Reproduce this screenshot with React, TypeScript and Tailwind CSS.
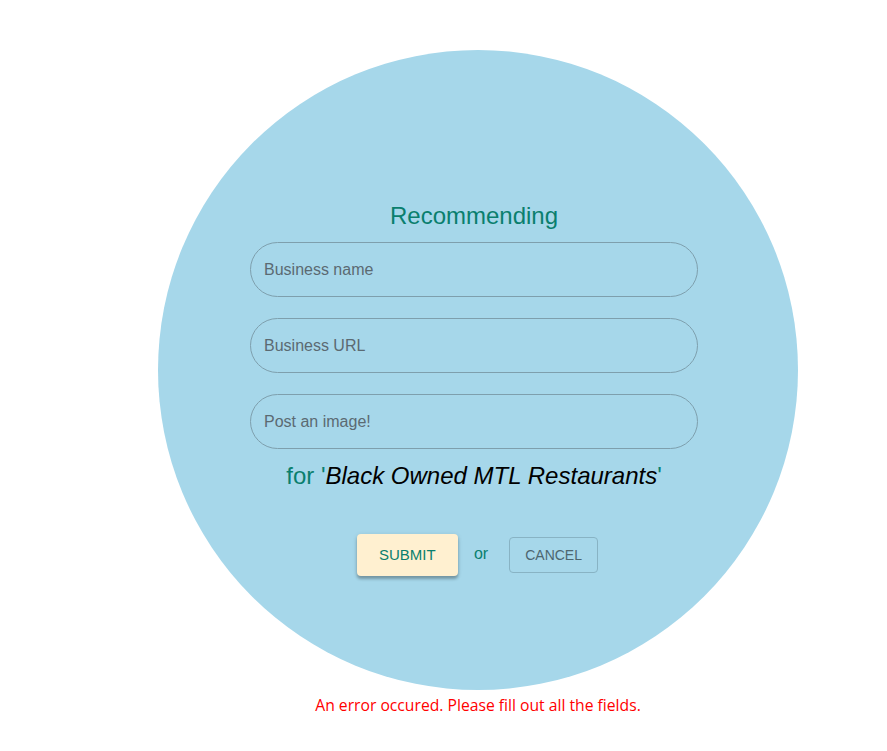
import React from 'react';

const Field: React.FC<{ placeholder: string }> = ({ placeholder }) => (
    <input
        type="text"
        placeholder={placeholder}
        className="w-[448px] h-[55px] rounded-full border border-[#7e9fad] bg-transparent pl-[13px] text-[16px] text-[#333] placeholder:text-[#5b6a72] outline-none"
    />
);

const App: React.FC = () => {
    return (
        <div className="min-h-screen bg-white pt-[50px] pl-[158px] font-['Liberation_Sans',Arial,sans-serif]">
            <div className="w-[640px] flex flex-col items-center">
                <div className="w-[640px] h-[640px] rounded-full bg-[#a6d7ea] flex flex-col items-center pt-[152px] pr-[8px]">
                    <h2 className="text-[24px] leading-[28px] text-[#0a7f6e]">Recommending</h2>
                    <form className="mt-[12px] flex flex-col gap-[21px]" onSubmit={(e) => e.preventDefault()}>
                        <Field placeholder="Business name" />
                        <Field placeholder="Business URL" />
                        <Field placeholder="Post an image!" />
                    </form>
                    <p className="mt-[13px] text-[24px] leading-[28px] text-[#0a7f6e]">
                        for '<span className="italic text-black">Black Owned MTL Restaurants</span>'
                    </p>
                    <div className="mt-[44px] ml-[7px] flex items-center">
                        <button className="w-[101px] h-[42px] rounded-[4px] bg-[#fff0d0] text-[15px] text-[#0a7f6e] shadow-[0_3px_3px_rgba(0,0,0,0.25),0_1px_5px_rgba(0,0,0,0.12)]">
                            SUBMIT
                        </button>
                        <span className="ml-[16px] mr-[21px] text-[16px] text-[#0a7f6e] -mt-[3px]">or</span>
                        <button className="w-[89px] h-[36px] rounded-[4px] border border-[#88b3c4] text-[14px] text-[#4d6670]">
                            CANCEL
                        </button>
                    </div>
                </div>
                <p className="mt-[3px] text-[15.7px] leading-[24px] text-[#ff0000] font-['Open_Sans',sans-serif]">
                    An error occured. Please fill out all the fields.
                </p>
            </div>
        </div>
    );
};

export default App;
